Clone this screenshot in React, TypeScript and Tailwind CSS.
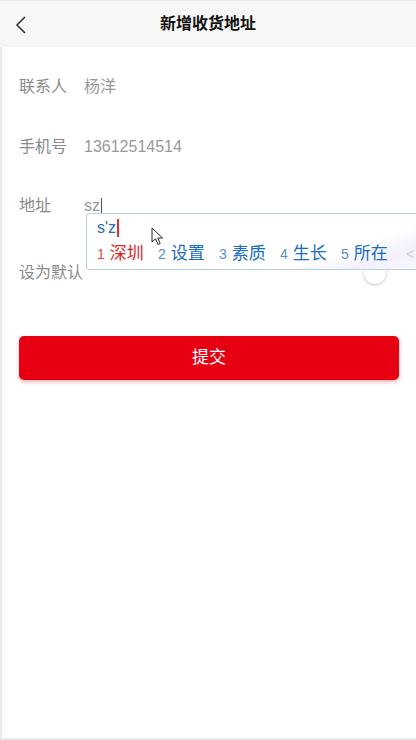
import React from "react";

const font = { fontFamily: '"Liberation Sans", "Noto Sans CJK SC", sans-serif' };

function Row({ label, children, className = "" }: { label: string; children?: React.ReactNode; className?: string }) {
  return (
    <div className={`flex items-center px-[17px] ${className}`}>
      <span className="w-[65px] text-[16px] text-[#8a8a8a]">{label}</span>
      <div className="flex-1 text-[16px] text-[#999]">{children}</div>
    </div>
  );
}

export default function App() {
  const candidates = [
    { n: "1", w: "深圳", active: true },
    { n: "2", w: "设置" },
    { n: "3", w: "素质" },
    { n: "4", w: "生长" },
    { n: "5", w: "所在" },
  ];

  return (
    <div className="relative h-[740px] w-[416px] overflow-hidden bg-white flex flex-col" style={font}>
      {/* Header */}
      <header className="h-[47px] shrink-0 bg-[#f7f7f5] border-t border-[#ececec] flex items-center relative">
        <svg className="absolute left-[14px] top-[14px]" width="14" height="20" viewBox="0 0 14 20">
          <path d="M11 2 L3 10 L11 18" fill="none" stroke="#333" strokeWidth="1.6" />
        </svg>
        <h1 className="w-full text-center text-[16px] font-bold text-[#111]">新增收货地址</h1>
      </header>

      <div className="flex-1 flex flex-col border-l-2 border-b-2 border-[#ebebeb] pt-[10px]">
        <Row label="联系人" className="h-[60px]">杨洋</Row>
        <Row label="手机号" className="h-[59px]">13612514514</Row>
        <Row label="地址" className="h-[60px]">
          <span className="inline-flex items-center">
            sz<span className="ml-px inline-block h-[17px] w-px bg-[#555]" />
          </span>
        </Row>
        <div className="flex items-center justify-between px-[17px] h-[66px] pt-[8px]">
          <span className="text-[16px] text-[#8a8a8a]">设为默认</span>
          <div className="mr-[13px] h-[24px] w-[44px] rounded-full bg-white flex items-center justify-end">
            <div className="h-[22px] w-[22px] rounded-full bg-white shadow-[0_1px_3px_rgba(0,0,0,0.25)]" />
          </div>
        </div>

        <div className="px-[17px] mt-[34px]">
          <button className="w-full h-[44px] rounded-[5px] bg-[#e60012] text-white text-[17px] shadow-[0_2px_4px_rgba(230,0,18,0.3)]">
            提交
          </button>
        </div>
      </div>

      {/* IME candidate popup */}
      <div
        className="absolute left-[86px] top-[213px] h-[57px] w-[360px] rounded-[3px] border border-[#b9cfe3] bg-white"
        style={{ background: "linear-gradient(160deg, #ffffff 0%, #ffffff 70%, #f3f0fb 82%, #fbfaff 100%)" }}
      >
        <div className="pl-[10px] pt-[2px] h-[26px] flex items-center text-[16px] text-[#2a6db0]">
          s'z<span className="ml-px inline-block h-[18px] w-[1.5px] bg-[#e03030]" />
        </div>
        <div className="pl-[10px] flex items-center h-[28px]">
          {candidates.map((c) => (
            <span key={c.n} className="w-[61px] shrink-0 flex items-baseline">
              <span className={`text-[14px] mr-[5px] ${c.active ? "text-[#e04a4a]" : "text-[#5b8fc8]"}`}>{c.n}</span>
              <span className={`text-[17px] ${c.active ? "text-[#d8262a]" : "text-[#1b6cbb]"}`}>{c.w}</span>
            </span>
          ))}
          <span className="text-[14px] text-[#cfcfcf] ml-[4px]">&lt;</span>
        </div>
      </div>

      {/* Mouse cursor */}
      <svg className="absolute left-[151px] top-[227px]" width="14" height="20" viewBox="0 0 14 20">
        <path d="M1 1 L1 15 L4.5 11.8 L7 17.5 L9.2 16.5 L6.8 11 L11.5 11 Z" fill="#fff" stroke="#222" strokeWidth="1" strokeLinejoin="round" />
      </svg>
    </div>
  );
}
